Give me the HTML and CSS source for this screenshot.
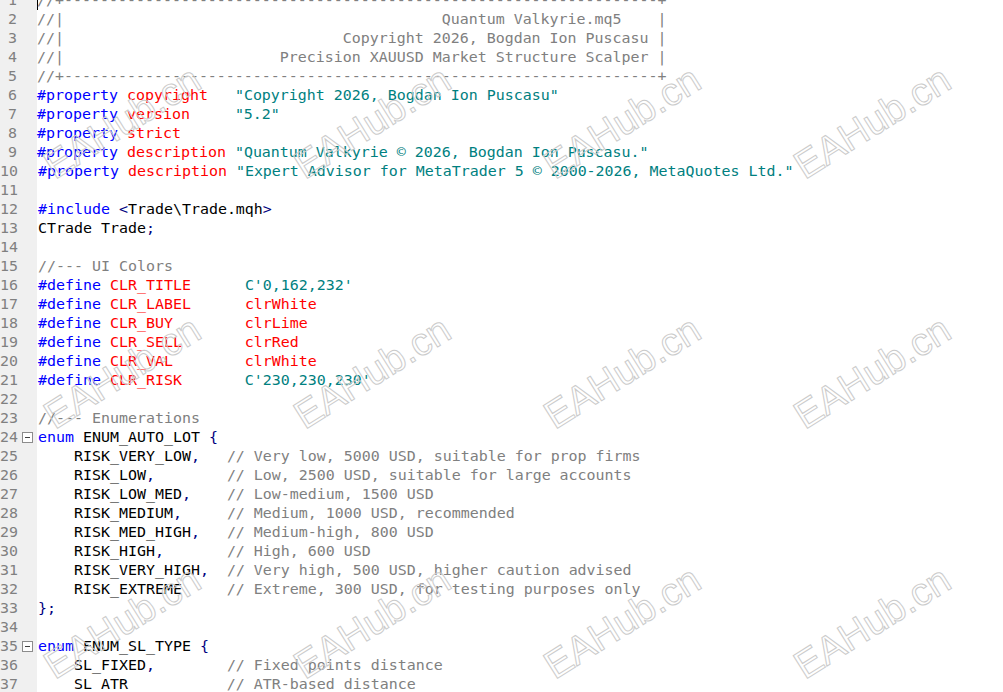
FILE: index.html
```html
<!DOCTYPE html>
<html>
<head>
<meta charset="utf-8">
<title>Quantum Valkyrie.mq5</title>
<link rel="stylesheet" href="styles.css">
</head>
<body>
<div class="editor">
  <div class="lines">
    <div class="row"><span class="ln">1</span><span class="fold"></span><pre class="code"><span class="caret"></span><span class="c">//+------------------------------------------------------------------+</span></pre></div>
    <div class="row"><span class="ln">2</span><span class="fold"></span><pre class="code"><span class="c">//|                                          Quantum Valkyrie.mq5    |</span></pre></div>
    <div class="row"><span class="ln">3</span><span class="fold"></span><pre class="code"><span class="c">//|                               Copyright 2026, Bogdan Ion Puscasu |</span></pre></div>
    <div class="row"><span class="ln">4</span><span class="fold"></span><pre class="code"><span class="c">//|                        Precision XAUUSD Market Structure Scalper |</span></pre></div>
    <div class="row"><span class="ln">5</span><span class="fold"></span><pre class="code"><span class="c">//+------------------------------------------------------------------+</span></pre></div>
    <div class="row"><span class="ln">6</span><span class="fold"></span><pre class="code"><span class="k">#property</span> <span class="p">copyright</span>   <span class="s">"Copyright 2026, Bogdan Ion Puscasu"</span></pre></div>
    <div class="row"><span class="ln">7</span><span class="fold"></span><pre class="code"><span class="k">#property</span> <span class="p">version</span>     <span class="s">"5.2"</span></pre></div>
    <div class="row"><span class="ln">8</span><span class="fold"></span><pre class="code"><span class="k">#property</span> <span class="p">strict</span></pre></div>
    <div class="row"><span class="ln">9</span><span class="fold"></span><pre class="code"><span class="k">#property</span> <span class="p">description</span> <span class="s">"Quantum Valkyrie © 2026, Bogdan Ion Puscasu."</span></pre></div>
    <div class="row"><span class="ln">10</span><span class="fold"></span><pre class="code"><span class="k">#property</span> <span class="p">description</span> <span class="s">"Expert Advisor for MetaTrader 5 © 2000-2026, MetaQuotes Ltd."</span></pre></div>
    <div class="row"><span class="ln">11</span><span class="fold"></span><pre class="code"></pre></div>
    <div class="row"><span class="ln">12</span><span class="fold"></span><pre class="code"><span class="k">#include</span> <span class="o">&lt;</span>Trade\Trade.mqh<span class="o">&gt;</span></pre></div>
    <div class="row"><span class="ln">13</span><span class="fold"></span><pre class="code">CTrade Trade<span class="o">;</span></pre></div>
    <div class="row"><span class="ln">14</span><span class="fold"></span><pre class="code"></pre></div>
    <div class="row"><span class="ln">15</span><span class="fold"></span><pre class="code"><span class="c">//--- UI Colors</span></pre></div>
    <div class="row"><span class="ln">16</span><span class="fold"></span><pre class="code"><span class="k">#define</span> <span class="p">CLR_TITLE</span>      <span class="s">C'0,162,232'</span></pre></div>
    <div class="row"><span class="ln">17</span><span class="fold"></span><pre class="code"><span class="k">#define</span> <span class="p">CLR_LABEL</span>      <span class="p">clrWhite</span></pre></div>
    <div class="row"><span class="ln">18</span><span class="fold"></span><pre class="code"><span class="k">#define</span> <span class="p">CLR_BUY</span>        <span class="p">clrLime</span></pre></div>
    <div class="row"><span class="ln">19</span><span class="fold"></span><pre class="code"><span class="k">#define</span> <span class="p">CLR_SELL</span>       <span class="p">clrRed</span></pre></div>
    <div class="row"><span class="ln">20</span><span class="fold"></span><pre class="code"><span class="k">#define</span> <span class="p">CLR_VAL</span>        <span class="p">clrWhite</span></pre></div>
    <div class="row"><span class="ln">21</span><span class="fold"></span><pre class="code"><span class="k">#define</span> <span class="p">CLR_RISK</span>       <span class="s">C'230,230,230'</span></pre></div>
    <div class="row"><span class="ln">22</span><span class="fold"></span><pre class="code"></pre></div>
    <div class="row"><span class="ln">23</span><span class="fold"></span><pre class="code"><span class="c">//--- Enumerations</span></pre></div>
    <div class="row"><span class="ln">24</span><span class="fold"><span class="box"></span></span><pre class="code"><span class="k">enum</span> ENUM_AUTO_LOT <span class="o">{</span></pre></div>
    <div class="row"><span class="ln">25</span><span class="fold"></span><pre class="code">    RISK_VERY_LOW<span class="o">,</span>   <span class="c">// Very low, 5000 USD, suitable for prop firms</span></pre></div>
    <div class="row"><span class="ln">26</span><span class="fold"></span><pre class="code">    RISK_LOW<span class="o">,</span>        <span class="c">// Low, 2500 USD, suitable for large accounts</span></pre></div>
    <div class="row"><span class="ln">27</span><span class="fold"></span><pre class="code">    RISK_LOW_MED<span class="o">,</span>    <span class="c">// Low-medium, 1500 USD</span></pre></div>
    <div class="row"><span class="ln">28</span><span class="fold"></span><pre class="code">    RISK_MEDIUM<span class="o">,</span>     <span class="c">// Medium, 1000 USD, recommended</span></pre></div>
    <div class="row"><span class="ln">29</span><span class="fold"></span><pre class="code">    RISK_MED_HIGH<span class="o">,</span>   <span class="c">// Medium-high, 800 USD</span></pre></div>
    <div class="row"><span class="ln">30</span><span class="fold"></span><pre class="code">    RISK_HIGH<span class="o">,</span>       <span class="c">// High, 600 USD</span></pre></div>
    <div class="row"><span class="ln">31</span><span class="fold"></span><pre class="code">    RISK_VERY_HIGH<span class="o">,</span>  <span class="c">// Very high, 500 USD, higher caution advised</span></pre></div>
    <div class="row"><span class="ln">32</span><span class="fold"></span><pre class="code">    RISK_EXTREME     <span class="c">// Extreme, 300 USD, for testing purposes only</span></pre></div>
    <div class="row"><span class="ln">33</span><span class="fold"></span><pre class="code"><span class="o">};</span></pre></div>
    <div class="row"><span class="ln">34</span><span class="fold"></span><pre class="code"></pre></div>
    <div class="row"><span class="ln">35</span><span class="fold"><span class="box"></span></span><pre class="code"><span class="k">enum</span> ENUM_SL_TYPE <span class="o">{</span></pre></div>
    <div class="row"><span class="ln">36</span><span class="fold"></span><pre class="code">    SL_FIXED<span class="o">,</span>        <span class="c">// Fixed points distance</span></pre></div>
    <div class="row"><span class="ln">37</span><span class="fold"></span><pre class="code">    SL_ATR           <span class="c">// ATR-based distance</span></pre></div>
    <div class="row"><span class="ln">38</span><span class="fold"></span><pre class="code"><span class="o">};</span></pre></div>
  </div>
  <div class="wm-layer" aria-hidden="true">
    <span class="wm r1 c1">EAHub.cn</span>
    <span class="wm r1 c2">EAHub.cn</span>
    <span class="wm r1 c3">EAHub.cn</span>
    <span class="wm r1 c4">EAHub.cn</span>
    <span class="wm r2 c1">EAHub.cn</span>
    <span class="wm r2 c2">EAHub.cn</span>
    <span class="wm r2 c3">EAHub.cn</span>
    <span class="wm r2 c4">EAHub.cn</span>
    <span class="wm r3 c1">EAHub.cn</span>
    <span class="wm r3 c2">EAHub.cn</span>
    <span class="wm r3 c3">EAHub.cn</span>
    <span class="wm r3 c4">EAHub.cn</span>
  </div>
</div>
</body>
</html>
```

FILE: styles.css
```css
html, body {
  margin: 0;
  padding: 0;
  background: #ffffff;
  overflow: hidden;
  width: 1003px;
  height: 692px;
}

.editor {
  position: relative;
  width: 1003px;
  height: 692px;
  overflow: hidden;
  background: linear-gradient(to right, #f0f0f0 0, #f0f0f0 37px, #ffffff 37px);
}

.lines {
  display: flex;
  flex-direction: column;
  margin-top: -9px;
  font-family: "DejaVu Sans Mono", "Liberation Mono", monospace;
  font-size: 14.95px;
}

.row {
  display: flex;
  height: 19px;
  line-height: 19px;
  align-items: center;
}

.ln {
  flex: 0 0 17px;
  text-align: right;
  color: #808080;
  white-space: nowrap;
  direction: rtl;
}

.fold {
  flex: 0 0 20px;
  height: 19px;
  display: flex;
  align-items: center;
  padding-left: 4px;
  box-sizing: border-box;
}

.box {
  width: 11px;
  height: 11px;
  box-sizing: border-box;
  border: 1px solid #8c8c8c;
  background: #ffffff;
  display: flex;
  align-items: center;
  justify-content: center;
}

.box::after {
  content: "";
  width: 5px;
  height: 1px;
  background: #404040;
}

.code {
  margin: 0;
  font: inherit;
  line-height: 19px;
  white-space: pre;
  color: #000000;
  flex: 1;
}

.caret {
  display: inline-block;
  width: 1px;
  height: 17px;
  margin-right: -1px;
  background: #000000;
  vertical-align: middle;
}

.k { color: #0000ff; }
.p { color: #ff0000; }
.s { color: #008080; }
.c { color: #808080; }
.o { color: #000080; }

.wm-layer {
  position: absolute;
  inset: 0;
  pointer-events: none;
}

.wm {
  position: absolute;
  font-family: "Liberation Sans", Arial, sans-serif;
  font-size: 39px;
  line-height: 1;
  color: transparent;
  -webkit-text-stroke: 1px #cbcbcb;
  white-space: nowrap;
  transform: translate(-50%, -50%) rotate(-32deg);
}

.c1 { left: 122px; }
.c2 { left: 372px; }
.c3 { left: 622px; }
.c4 { left: 872px; }
.r1 { top: 122px; }
.r2 { top: 372px; }
.r3 { top: 622px; }
```
